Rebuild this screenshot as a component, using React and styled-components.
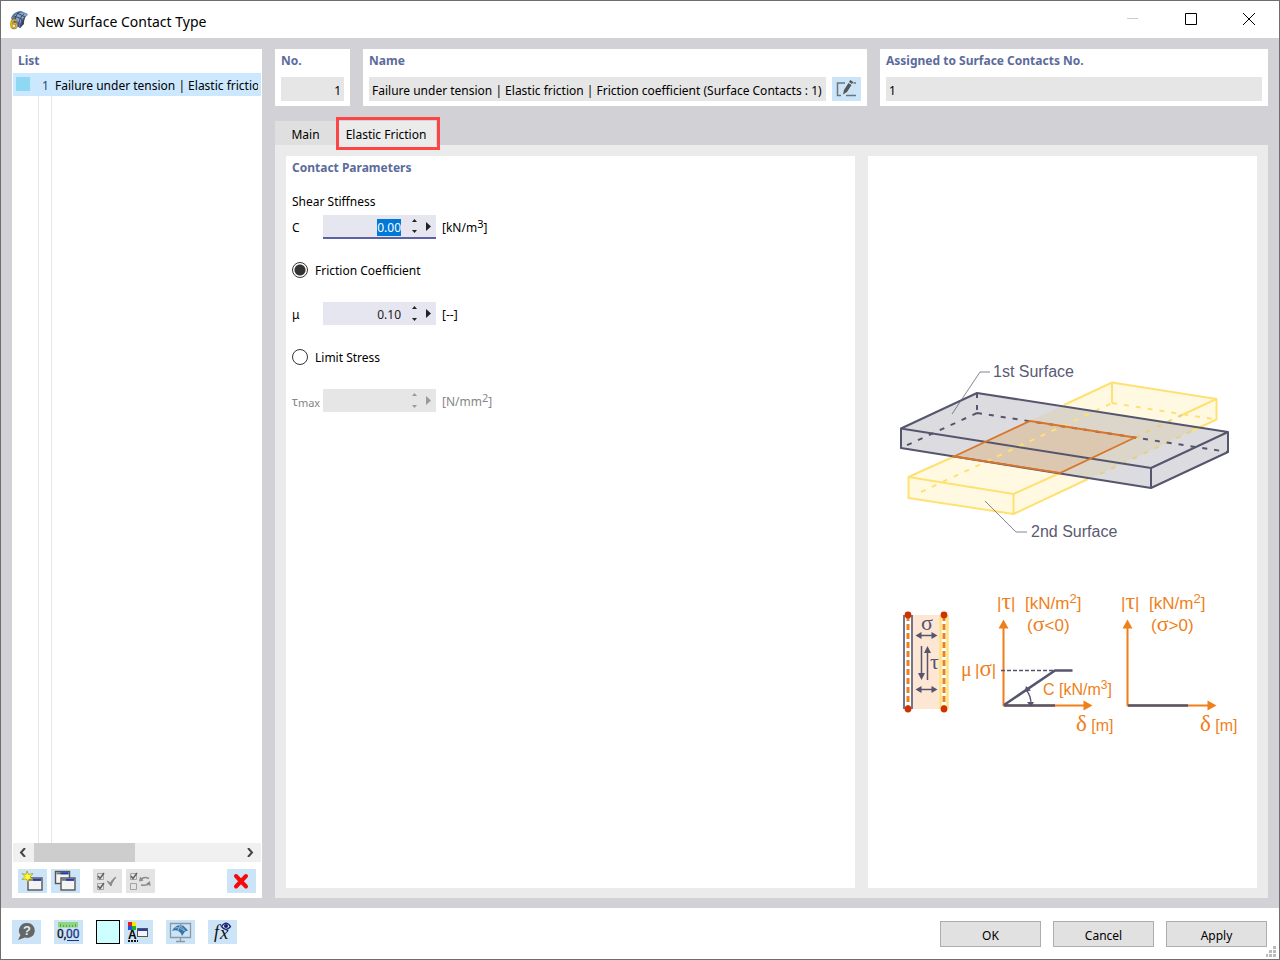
import React, { useEffect, useRef, useState } from 'react'
import styled, { createGlobalStyle } from 'styled-components'

const GlobalStyle = createGlobalStyle`
  * {
    box-sizing: border-box;
  }
  body {
    margin: 0;
    font-family: "Noto Sans", "Open Sans", sans-serif;
    font-size: 12px;
    line-height: 16px;
    color: #000;
  }
  button, input {
    font: inherit;
    color: inherit;
    margin: 0;
  }
  button {
    padding: 0;
    border: 0;
  }
  h1, h2 {
    margin: 0;
    font-size: inherit;
  }
`

const Window = styled.div`
  display: flex;
  flex-direction: column;
  min-height: 100vh;
  border: 1px solid #6e6e70;
  background: #fff;
`

const TitleBar = styled.header`
  display: flex;
  align-items: center;
  height: 37px;
  padding: 2px 1px 0 8px;
  gap: 6px;

  h1 {
    flex: 1;
    padding-top: 2px;
    font-size: 14px;
    line-height: 20px;
    font-weight: 400;
  }
`

const WindowButton = styled.button`
  width: 58px;
  height: 34px;
  background: none;
  color: ${props => (props.disabled ? '#ccc' : '#000')};

  svg {
    display: block;
    margin: auto;
  }
`

const Body = styled.main`
  flex: 1;
  display: flex;
  gap: 13px;
  padding: 11px 11px 10px;
  background: #d1d1d6;
`

const Sidebar = styled.aside`
  flex: 0 0 250px;
  display: flex;
  flex-direction: column;
  min-width: 0;
  background: #fff;
`

const Heading = styled.h2`
  display: block;
  padding: 4px 6px;
  line-height: 16px;
  font-weight: 700;
  color: #5b6b9b;
`

const List = styled.ul`
  flex: 1;
  margin: 0;
  padding: 0 1px;
  list-style: none;
  background: linear-gradient(#e8e8e8, #e8e8e8) 26px 0 / 1px 100% no-repeat,
    linear-gradient(#e8e8e8, #e8e8e8) 39px 0 / 1px 100% no-repeat;
`

const ListRow = styled.li`
  display: flex;
  height: 23px;
  padding-right: 3px;
  line-height: 26px;
  white-space: nowrap;
  background: #cce8ff;

  i {
    flex: none;
    width: 14px;
    height: 14px;
    margin: 4px 12px 0 3px;
    background: #8fd8f4;
  }
  b {
    flex: none;
    width: 13px;
    font-weight: 400;
    color: #24466b;
  }
  span {
    overflow: hidden;
  }
`

const ScrollBar = styled.div`
  display: flex;
  align-items: center;
  height: 19px;
  margin: 0 1px;
  background: #f0f0f0;

  button {
    width: 21px;
    height: 19px;
    padding-right: 2px;
    background: none;
  }
  svg {
    display: block;
    margin: auto;
  }
`

const Track = styled.div`
  flex: 1;
  height: 19px;

  div {
    width: 49%;
    height: 100%;
    background: #cdcdcd;
  }
`

const ListTools = styled.div`
  display: flex;
  gap: 4px;
  padding: 7px 6px 5px;
`

const Spacer = styled.span`
  flex: ${props => (props.$size ? `0 0 ${props.$size}px` : 1)};
`

const IconButton = styled.button`
  flex: none;
  width: 29px;
  height: 24px;
  background: ${props => (props.disabled ? '#e4e4e4' : '#cce4f7')};

  svg {
    display: block;
  }
`

const Content = styled.section`
  flex: 1;
  display: flex;
  flex-direction: column;
  min-width: 0;
`

const Cards = styled.div`
  display: flex;
  gap: 13px;
  height: 57px;
`

const Card = styled.div`
  flex: ${props => props.$flex};
  min-width: 0;
  background: #fff;
`

const CardRow = styled.div`
  display: flex;
  gap: 6px;
  padding: 4px 6px 0;
`

const TextBox = styled.input`
  flex: 1;
  min-width: 0;
  height: 24px;
  padding: 2px 3px 0;
  border: 0;
  background: #e6e6e6;
  text-align: ${props => props.$align || 'left'};
`

const Tabs = styled.div`
  display: flex;
  height: 24px;
  margin-top: 15px;
`

const Tab = styled.button`
  position: relative;
  width: ${props => props.$width}px;
  padding: 3px 3px 0 0;
  background: ${props => (props.$active ? '#ebebeb' : '#dfdfdf')};

  &::after {
    content: '';
    display: ${props => (props.$active ? 'block' : 'none')};
    position: absolute;
    inset: -4px -4px -5px -3px;
    border: 3px solid #fa4646;
  }
`

const TabPanel = styled.div`
  flex: 1;
  display: flex;
  gap: 13px;
  padding: 11px 11px 10px;
  background: #ebebeb;
`

const Form = styled.form`
  flex: 569 1 0;
  background: #fff;
`

const Preview = styled.div`
  flex: 389 1 0;
  display: flex;
  align-items: center;
  justify-content: center;
  padding-top: 56px;
  background: #fff;
`

const Group = styled.p`
  margin: 14px 6px 5px;
  line-height: 16px;
`

const Field = styled.div`
  display: flex;
  align-items: flex-start;
  height: 24px;
  padding-left: 6px;
  line-height: 26px;
  color: ${props => (props.$disabled ? '#868686' : '#000')};

  label {
    width: 31px;
  }
  sup, sub {
    font-size: 11px;
    line-height: 0;
  }
  sup {
    vertical-align: 4px;
  }
  sub {
    vertical-align: -1px;
  }
`

const SpinBox = styled.div`
  display: flex;
  width: 113px;
  height: ${props => (props.$focused ? 24 : 23)}px;
  margin-right: 6px;
  border-bottom: ${props => (props.$focused ? '2px solid #5d62a8' : '0')};
  background: ${props => (props.$disabled ? '#e6e6e6' : '#e6e6f1')};
  color: ${props => (props.$disabled ? '#9a9a9a' : '#222')};

  input {
    width: 84px;
    height: 17px;
    margin-top: 4px;
    padding: 0 6px 0 0;
    border: 0;
    outline: 0;
    background: none;
    line-height: 17px;
    text-align: right;
  }
  input::selection {
    background: #0078d7;
    color: #fff;
  }
`

const Spinner = styled.div`
  display: flex;
  flex-direction: column;
  width: 15px;

  button {
    flex: 1;
    background: none;
  }
  svg {
    display: block;
    margin: auto;
  }
`

const MoreButton = styled.button`
  width: 14px;
  background: none;

  svg {
    display: block;
    margin-left: 4px;
  }
`

const Option = styled.label`
  display: flex;
  align-items: center;
  gap: 7px;
  height: 16px;
  margin: 23px 6px 24px;

  input {
    appearance: none;
    width: 16px;
    height: 16px;
    border: 1px solid #333;
    border-radius: 50%;
    background: #fff;
  }
  input:checked {
    background: radial-gradient(circle, #333 5px, #fff 6px);
  }
  span {
    padding-top: 2px;
  }
`

const FooterBar = styled.footer`
  position: relative;
  display: flex;
  gap: 12px;
  height: 51px;
  padding: 12px 12px 0 11px;
`

const FooterTools = styled.div`
  flex: 1;
  display: flex;
  gap: 13px;
`

const ColorTools = styled.div`
  display: flex;
  gap: 4px;
`

const Swatch = styled.button`
  width: 24px;
  height: 24px;
  border: 1px solid #000;
  background: #ccffff;
`

const PushButton = styled.button`
  width: 101px;
  height: 26px;
  margin-top: 1px;
  padding-top: 3px;
  border: 1px solid #adadad;
  background: #e1e1e1;
`

const Grip = styled.svg`
  position: absolute;
  right: 3px;
  bottom: 2px;
`

const AppLogo = () => (
  <svg width="20" height="20" viewBox="0 0 20 20" overflow="visible" aria-hidden="true">
    <path d="M2 7C4 2 8 0 12 0l7 3c-3 2-4 5-4 9l-4 5-5-3z" fill="#5d78a8" />
    <path d="M5 5c3-3 6-4 10-3l4 2c-3 1-5 4-5 9L9 11z" fill="#8da4c8" />
    <path d="M5 5l8 3M8 2l8 4M13 8l-2 9M10 1C7 4 6 7 6 11M15 3c-3 2-5 6-6 13" stroke="#31496f" fill="none" />
    <path d="M19 4c-4 2-4 6-4 9l-3 3c0-6 2-10 7-12z" fill="#39465a" />
    <text x="1" y="18" fontSize="14" fontWeight="700" fill="#e5bd2a" stroke="#6f5710" strokeWidth=".4" fontFamily="Liberation Sans">6</text>
  </svg>
)

const Win = ({ x, y }) => (
  <g>
    <rect x={x} y={y} width="14" height="12" fill="#f4f4f4" stroke="#555" strokeWidth="1.4" />
    <path d={`M${x + 1} ${y + 1.8}h12`} stroke="#777" strokeWidth="2" />
    <path d={`M${x + 5} ${y + 1.8}h8`} stroke="#253bb5" strokeWidth="2" />
  </g>
)

const NewIcon = () => (
  <svg width="29" height="24" viewBox="0 0 29 24">
    <Win x={10} y={9} />
    <path d="M9 2l1.500 3.500L15 4.500 12 8l3 2.500-4-.5-1 3.500L8.500 10 4 10.500 7 7.500 4 4.500l4 1z" fill="#ffff30" stroke="#9a9020" strokeWidth=".7" />
  </svg>
)

const CopyIcon = () => (
  <svg width="29" height="24" viewBox="0 0 29 24">
    <Win x={4.5} y={2.5} />
    <Win x={10} y={9} />
  </svg>
)

const CheckAllIcon = () => (
  <svg width="29" height="24" viewBox="0 0 29 24" fill="none" stroke="#a3a3a3">
    <path d="M4.500 4.500h6v6h-6zM4.500 14.500h6v6h-6z" />
    <path d="M5 7l2 2.500L11 4M5 17l2 2.500L11 14" stroke="#5f5f5f" strokeWidth="1.4" />
    <path d="M14 12l4 5c1-4 3-6 5-9-3 2-4 3-5.500 6z" fill="#8a8a8a" stroke="#8a8a8a" />
  </svg>
)

const InvertIcon = () => (
  <svg width="29" height="24" viewBox="0 0 29 24" fill="none" stroke="#a3a3a3">
    <path d="M4.500 4.500h6v6h-6zM4.500 14.500h6v6h-6z" />
    <path d="M5 7l2 2.500L11 4" stroke="#5f5f5f" strokeWidth="1.4" />
    <path d="M15 10.500c2-2.500 5-2.500 8-1M23 14.500c-2 2-5 2-8 1.500" stroke="#8a8a8a" strokeWidth="1.500" />
    <path d="M13 12.500l1-5 3.500 4zM24.500 17l-.5-5-4 3z" fill="#8a8a8a" stroke="none" />
  </svg>
)

const DeleteIcon = () => (
  <svg width="29" height="24" viewBox="0 0 29 24">
    <path d="M9 7l10 10.500M19 7L9 17.500" stroke="#f80808" strokeWidth="4" strokeLinecap="round" />
  </svg>
)

const EditIcon = () => (
  <svg width="29" height="24" viewBox="0 0 29 24" fill="none" stroke="#6d7377" strokeWidth="1.5">
    <path d="M13 6H5.500v12.500H9M14 18.500h10M21.500 6H24" />
    <path d="M11 17.500l1-4.500 4.500-7 3 2-4.500 7z" fill="#555" stroke="none" />
    <path d="M17 5l1.300-2 3 2L20 7z" fill="#555" stroke="none" />
  </svg>
)

const HelpIcon = () => (
  <svg width="29" height="24" viewBox="0 0 29 24">
    <path d="M15 3a7.500 7.500 0 1 1-2 14.600L6 20l2.500-5A7.500 7.500 0 0 1 15 3z" fill="#666" />
    <text x="15" y="15" fontSize="13" fontWeight="700" textAnchor="middle" fill="#dcecf9" fontFamily="Liberation Sans">?</text>
  </svg>
)

const UnitsIcon = () => (
  <svg width="29" height="24" viewBox="0 0 29 24">
    <path d="M4 2h20v5.500H4z" fill="#8fd67d" />
    <path d="M6.500 4v3M9.500 5v2M12.500 5v2M15.500 5v2M18.500 5v2M21.500 4v3" stroke="#5ba84b" />
    <text x="3" y="18" fontSize="12" fill="#111" stroke="#111" strokeWidth=".3" fontFamily="Roboto">0,<tspan fill="#1d3380" stroke="#1d3380">00</tspan></text>
    <path d="M13 20.500h12" stroke="#1d3380" />
  </svg>
)

const DisplayIcon = () => (
  <svg width="29" height="24" viewBox="0 0 29 24">
    <path d="M4 2h4v4H4z" fill="#e02020" />
    <path d="M8 2h4v4H8z" fill="#ffe600" />
    <path d="M4 6h4v4H4z" fill="#2450e0" />
    <path d="M8 6h4v4H8z" fill="#20b030" />
    <text x="4" y="19" fontSize="12" fontWeight="700" fontFamily="Liberation Sans">A</text>
    <path d="M4 21h10" stroke="#111" strokeWidth="2" strokeDasharray="2 1" />
    <rect x="13.500" y="8.500" width="10" height="8" fill="#f4f4f4" stroke="#555" />
    <path d="M14 10h9" stroke="#253bb5" strokeWidth="2" />
  </svg>
)

const MonitorIcon = () => (
  <svg width="29" height="24" viewBox="0 0 29 24">
    <path d="M4.500 3.500h20v14h-20zM14.500 18v3M10 21.500h9" fill="none" stroke="#8b98a3" strokeWidth="1.300" />
    <path d="M6 11c2-4 5-6 9-6.500 3 1 5 4 7 6l-3 1-3 4.500c-1-3-2-4-4-5-2-1-4-1-6 0z" fill="#3974a5" />
    <path d="M9 8c3-1 6 0 9 3M12 5c3 1 5 3 7 6M12 11c0-3 2-5 5-6" fill="none" stroke="#a8cbe4" strokeWidth=".8" />
  </svg>
)

const FormulaIcon = () => (
  <svg width="29" height="24" viewBox="0 0 29 24">
    <g fontStyle="italic" fill="#111" fontFamily="Liberation Serif">
      <text x="6" y="18" fontSize="18">f</text>
      <text x="12" y="19" fontSize="19">x</text>
    </g>
    <path d="M13.500 6.500c3-4.500 6-4.500 9 0-3 4-6 4-9 0z" fill="#dcecf9" stroke="#1d2070" strokeWidth="1.300" />
    <circle cx="18" cy="6" r="2" fill="#1d2070" />
  </svg>
)

const Symbol = ({ children, size = 22 }) => (
  <tspan fontFamily="Liberation Serif" fontSize={size}>{children}</tspan>
)

const AxisLabels = ({ x, sign }) => (
  <g>
    <text x={x} y="259" fontSize="17">|<Symbol size={24}>τ</Symbol>|</text>
    <text x={x + 28} y="259" fontSize="17">[kN/m<tspan fontSize="13" dy="-6">2</tspan><tspan dy="6">]</tspan></text>
    <text x={x + 30} y="281" fontSize="17">(<Symbol>σ</Symbol>{sign}0)</text>
    <text x={x + 79} y="381"><Symbol size={23}>δ</Symbol> [m]</text>
  </g>
)

const Contact = () => (
  <svg width="370" height="400" viewBox="-2 0 370 400" fill="none" fontFamily="Liberation Sans" fontSize="16" role="img" aria-label="Surface contact">
    <path d="M28 127L232 33l105 16v20L134 164 28 148z" fill="#fff9e2" />
    <path d="M21 78L97 43l251 39v20l-77 36L21 98z" fill="#5c5c70" fillOpacity=".22" />
    <path d="M150 71l105 16.500L180 123 74 106.500z" fill="#e09050" fillOpacity=".2" />
    <g stroke="#ffe173" strokeWidth="2" strokeLinejoin="round">
      <path d="M74 106.500L28.500 127v21l105 16v-20l-105-17M133.500 144L180 123M133.500 164L208 129M184 55l48-22.500L336.500 49v20.500L312 81M336.500 49L302 65M232 32.500V53" />
      <path d="M41 142L232 53M232 53l104 16.500" strokeDasharray="5 7" />
      <path d="M255 87.500L302 65M220 124l92-43" stroke="#e6d080" strokeDasharray="5 7" />
    </g>
    <g stroke="#55556e" strokeWidth="2" strokeLinejoin="round">
      <path d="M21 78.500L97 43l251 39-77 36zV98l250 40 77-36V82M271 118v20" />
      <path d="M97 43v20M97 63L21 98M97 63l251 39" strokeDasharray="5 7" />
    </g>
    <path d="M150 71l105 16.500L180 123 74 106.500z" stroke="#d9752b" strokeWidth="1.800" />
    <path d="M72 64l28-42h10M105 151l31 31h11" stroke="#66667a" strokeWidth=".8" />
    <g fill="#5a5a72">
      <text x="113" y="27">1st Surface</text>
      <text x="151" y="187">2nd Surface</text>
    </g>

    <path d="M32 265h28v94H32z" fill="#fde6d3" />
    <path d="M24 265v94M32 265v94" stroke="#74748a" strokeWidth="2" />
    <path d="M60.500 265v94M67.500 265v94" stroke="#ffe27c" strokeWidth="2.500" />
    <path d="M64 265v94" stroke="#fff" strokeWidth="4" />
    <path d="M28 265v94M64 265v94" stroke="#ef7f1a" strokeWidth="3" strokeDasharray="6 3" />
    <g fill="#cc3300">
      <circle cx="28" cy="265" r="3.400" />
      <circle cx="64" cy="265" r="3.400" />
      <circle cx="28" cy="359" r="3.400" />
      <circle cx="64" cy="359" r="3.400" />
    </g>
    <path d="M39 285.500h15M39 339.500h15M41.500 296v28M47.500 302v28" stroke="#55556e" strokeWidth="1.500" />
    <path d="M35.500 285.500l6-3.500v7zM57.500 285.500l-6-3.500v7zM35.500 339.500l6-3.500v7zM57.500 339.500l-6-3.500v7zM41.500 330l-3.500-7h7zM47.500 296l-3.500 7h7z" fill="#55556e" />
    <g fill="#55556e">
      <text x="41" y="280"><Symbol>σ</Symbol></text>
      <text x="50" y="319"><Symbol>τ</Symbol></text>
    </g>

    <path d="M123.500 356v-78M123 355.500h81M247.500 356v-78M247 355.500h81" stroke="#ef7f1a" strokeWidth="2" />
    <path d="M123.500 269.500l-5 9h10zM247.500 269.500l-5 9h10zM212.500 355.500l-9-5v10zM336.500 355.500l-9-5v10z" fill="#ef7f1a" />
    <g stroke="#55556e">
      <path d="M124 355l51-34.500h17.500M124 355.500h51M248 355.500h60" strokeWidth="2.500" />
      <path d="M121 320.500h54" strokeWidth="1.500" strokeDasharray="4 2" />
      <path d="M147 341c3 4 4 8 4 13" strokeWidth="1.300" />
    </g>
    <path d="M144.500 342l1.500-6 5 4.500zM151 357l-4-5h7z" fill="#55556e" />

    <g fill="#ef7f1a">
      <AxisLabels x={117} sign="<" />
      <AxisLabels x={241} sign=">" />
      <text x="81" y="326"><Symbol size={20}>μ</Symbol></text>
      <text x="95" y="326" fontSize="17">|<Symbol size={23}>σ</Symbol>|</text>
      <text x="163" y="345">C [kN/m<tspan fontSize="12" dy="-6">3</tspan><tspan dy="6">]</tspan></text>
    </g>
  </svg>
)

const NumberField = ({ id, symbol, unit, value, disabled, focused }) => {
  const [number, setNumber] = useState(value)
  const input = useRef(null)

  useEffect(() => {
    if (focused) {
      input.current.focus()
      input.current.select()
    }
  }, [focused])

  const step = amount => setNumber((Number(number) + amount).toFixed(2))

  return (
    <Field $disabled={disabled}>
      <label htmlFor={id}>{symbol}</label>
      <SpinBox $focused={focused} $disabled={disabled}>
        <input id={id} ref={input} value={number} disabled={disabled} onChange={e => setNumber(e.target.value)} />
        <Spinner>
          <button type="button" aria-label="Increase" disabled={disabled} onClick={() => step(0.01)}>
            <svg width="5" height="3"><path d="M0 3l2.500-3L5 3z" fill="currentColor" /></svg>
          </button>
          <button type="button" aria-label="Decrease" disabled={disabled} onClick={() => step(-0.01)}>
            <svg width="5" height="3"><path d="M0 0l2.500 3L5 0z" fill="currentColor" /></svg>
          </button>
        </Spinner>
        <MoreButton type="button" aria-label="More" disabled={disabled}>
          <svg width="5" height="9"><path d="M0 0l5 4.500L0 9z" fill="currentColor" /></svg>
        </MoreButton>
      </SpinBox>
      <span>{unit}</span>
    </Field>
  )
}

export default function App() {
  const [mode, setMode] = useState('friction')

  return (
    <Window>
      <GlobalStyle />
      <TitleBar>
        <AppLogo />
        <h1>New Surface Contact Type</h1>
        <div>
          <WindowButton aria-label="Minimize" disabled>
            <svg width="12" height="12"><path d="M0 5.500h11" stroke="currentColor" /></svg>
          </WindowButton>
          <WindowButton aria-label="Maximize">
            <svg width="12" height="12"><path d="M.5.5h11v11H.5z" fill="none" stroke="currentColor" /></svg>
          </WindowButton>
          <WindowButton aria-label="Close">
            <svg width="12" height="12"><path d="M0 0l12 12M12 0L0 12" stroke="currentColor" /></svg>
          </WindowButton>
        </div>
      </TitleBar>

      <Body>
        <Sidebar>
          <Heading>List</Heading>
          <List>
            <ListRow>
              <i />
              <b>1</b>
              <span>Failure under tension | Elastic friction | Friction coefficient</span>
            </ListRow>
          </List>
          <ScrollBar>
            <button aria-label="Scroll left">
              <svg width="8" height="9"><path d="M6 0L2 4.500 6 9" fill="none" stroke="#444" strokeWidth="2" /></svg>
            </button>
            <Track><div /></Track>
            <button aria-label="Scroll right">
              <svg width="8" height="9"><path d="M2 0l4 4.500L2 9" fill="none" stroke="#444" strokeWidth="2" /></svg>
            </button>
          </ScrollBar>
          <ListTools>
            <IconButton aria-label="New"><NewIcon /></IconButton>
            <IconButton aria-label="Copy"><CopyIcon /></IconButton>
            <Spacer $size={5} />
            <IconButton aria-label="Select all" disabled><CheckAllIcon /></IconButton>
            <IconButton aria-label="Invert selection" disabled><InvertIcon /></IconButton>
            <Spacer />
            <IconButton aria-label="Delete"><DeleteIcon /></IconButton>
          </ListTools>
        </Sidebar>

        <Content>
          <Cards>
            <Card $flex="0 0 75px">
              <Heading as="label" htmlFor="no">No.</Heading>
              <CardRow><TextBox id="no" $align="right" readOnly value="1" /></CardRow>
            </Card>
            <Card $flex="504 1 0">
              <Heading as="label" htmlFor="name">Name</Heading>
              <CardRow>
                <TextBox id="name" readOnly value="Failure under tension | Elastic friction | Friction coefficient (Surface Contacts : 1)" />
                <IconButton aria-label="Edit name"><EditIcon /></IconButton>
              </CardRow>
            </Card>
            <Card $flex="388 1 0">
              <Heading as="label" htmlFor="assigned">Assigned to Surface Contacts No.</Heading>
              <CardRow><TextBox id="assigned" readOnly value="1" /></CardRow>
            </Card>
          </Cards>

          <Tabs>
            <Tab $width={64}>Main</Tab>
            <Tab $width={97} $active>Elastic Friction</Tab>
          </Tabs>
          <TabPanel>
            <Form>
              <Heading>Contact Parameters</Heading>
              <Group>Shear Stiffness</Group>
              <NumberField id="stiffness" symbol="C" value="0.00" unit={<>[kN/m<sup>3</sup>]</>} focused />
              <Option>
                <input type="radio" name="mode" checked={mode === 'friction'} onChange={() => setMode('friction')} />
                <span>Friction Coefficient</span>
              </Option>
              <NumberField id="friction" symbol="μ" value="0.10" unit="[--]" disabled={mode !== 'friction'} />
              <Option>
                <input type="radio" name="mode" checked={mode === 'limit'} onChange={() => setMode('limit')} />
                <span>Limit Stress</span>
              </Option>
              <NumberField id="limit" symbol={<>τ<sub>max</sub></>} value="" unit={<>[N/mm<sup>2</sup>]</>} disabled={mode !== 'limit'} />
            </Form>
            <Preview>
              <Contact />
            </Preview>
          </TabPanel>
        </Content>
      </Body>

      <FooterBar>
        <FooterTools>
          <IconButton aria-label="Help"><HelpIcon /></IconButton>
          <IconButton aria-label="Units"><UnitsIcon /></IconButton>
          <ColorTools>
            <Swatch aria-label="Color" />
            <IconButton aria-label="Display"><DisplayIcon /></IconButton>
          </ColorTools>
          <IconButton aria-label="View"><MonitorIcon /></IconButton>
          <IconButton aria-label="Formula"><FormulaIcon /></IconButton>
        </FooterTools>
        <PushButton>OK</PushButton>
        <PushButton>Cancel</PushButton>
        <PushButton>Apply</PushButton>
        <Grip width="10" height="11">
          <path d="M7 0h3v3H7zM3 4h3v3H3zM7 4h3v3H7zM0 8h2v3H0zM3 8h3v3H3zM7 8h3v3H7z" fill="#bbb" />
        </Grip>
      </FooterBar>
    </Window>
  )
}
